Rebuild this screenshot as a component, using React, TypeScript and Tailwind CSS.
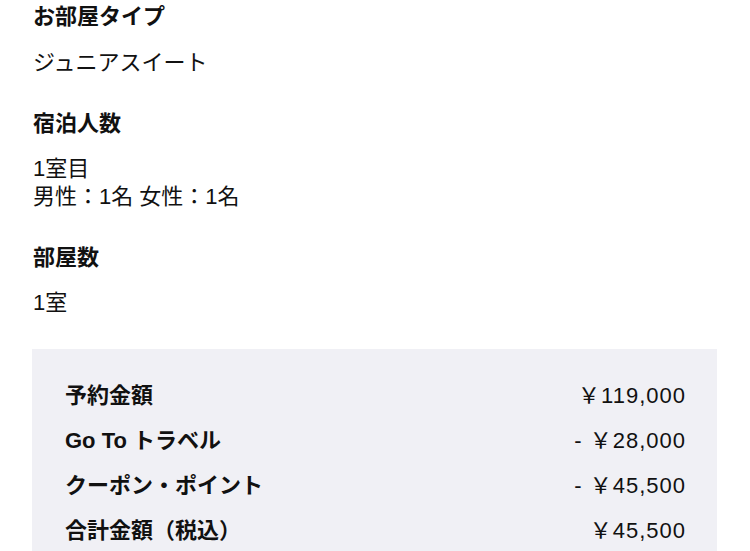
import React from 'react';

const rows = [
  { label: '予約金額', value: '￥119,000' },
  { label: 'Go To トラベル', value: '- ￥28,000' },
  { label: 'クーポン・ポイント', value: '- ￥45,500' },
  { label: '合計金額（税込）', value: '￥45,500' },
];

const App: React.FC = () => {
  return (
    <div
      className="w-[750px] h-[551px] overflow-hidden bg-white text-[#111] text-[22px] leading-[28px]"
      style={{ fontFamily: '"Liberation Sans", "Noto Sans CJK JP", sans-serif' }}
    >
      <div className="pl-[33px] pt-[3px]">
        <h2 className="font-bold">お部屋タイプ</h2>
        <p className="mt-[18px]">ジュニアスイート</p>

        <h2 className="font-bold mt-[33px]">宿泊人数</h2>
        <div className="mt-[17px]">
          <p>1室目</p>
          <p>男性：1名 女性：1名</p>
        </div>

        <h2 className="font-bold mt-[33px]">部屋数</h2>
        <p className="mt-[17px]">1室</p>
      </div>

      <div className="mt-[32px] ml-[32px] w-[685px] bg-[#f0f0f5] pt-[33px] pb-[20px] pl-[33px] pr-[32px] flex flex-col gap-[17px]">
        {rows.map((row) => (
          <div key={row.label} className="flex justify-between">
            <span className="font-bold">{row.label}</span>
            <span className="tracking-[1px] -mr-[1px]">{row.value}</span>
          </div>
        ))}
      </div>
    </div>
  );
};

export default App;
